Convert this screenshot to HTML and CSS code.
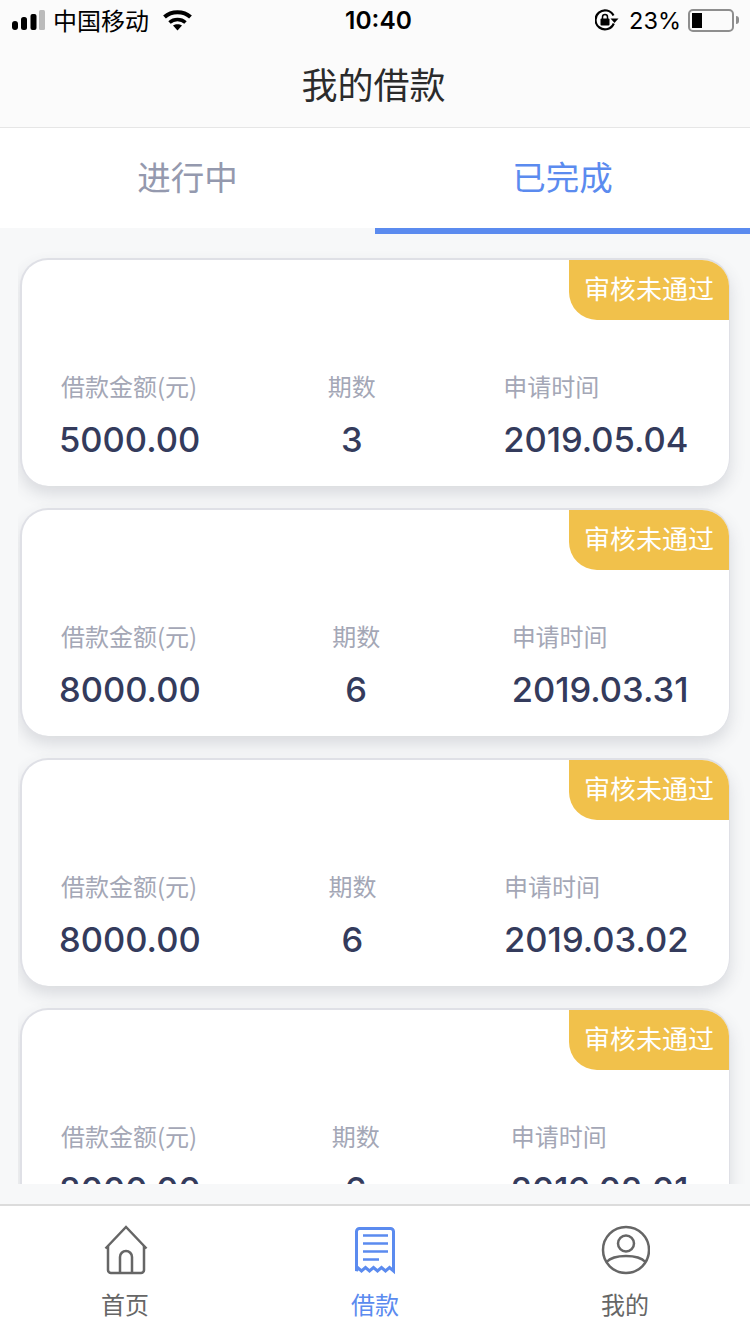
FILE: index.html
```html
<!DOCTYPE html>
<html lang="zh-CN">
<head>
    <meta charset="UTF-8">
    <meta name="viewport" content="width=device-width, initial-scale=1.0">
    <title>我的借款</title>
    <link rel="stylesheet" href="styles.css">
</head>
<body>
    <div class="app">
        <div class="status-bar">
            <div class="status-left">
                <svg class="signal" width="33" height="20" viewBox="0 0 33 20">
                    <rect x="0" y="11" width="6" height="9" rx="3" fill="#000"/>
                    <rect x="9" y="7" width="6" height="13" rx="2.5" fill="#000"/>
                    <rect x="18.500" y="4" width="6" height="16" rx="2" fill="#000"/>
                    <rect x="27" y="0" width="6" height="20" rx="1.500" fill="#bbb"/>
                </svg>
                <span class="carrier">中国移动</span>
                <svg class="wifi" width="29" height="21" viewBox="0 0 29 21">
                    <path d="M1.500 7C8.500.5 20.500.5 27.500 7" fill="none" stroke="#000" stroke-width="4"/>
                    <path d="M6.500 12.500C11 8.500 18 8.500 22.500 12.500" fill="none" stroke="#000" stroke-width="3.600"/>
                    <path d="M10 15.500C12.500 13.800 16.500 13.800 19 15.500L14.500 20.500Z" fill="#000"/>
                </svg>
            </div>
            <div class="status-time">10:40</div>
            <div class="status-right">
                <svg class="rotate-lock" width="24" height="22" viewBox="0 0 24 22">
                    <path d="M18.800 14.500A9.500 9.500 0 1 1 18.500 6.500" fill="none" stroke="#000" stroke-width="2.200"/>
                    <path d="M15.500 9.500h8l-4 4.500Z" fill="#000"/>
                    <rect x="5.500" y="9.500" width="9" height="7" rx="1" fill="#000"/>
                    <path d="M7.500 10V8a2.500 2.500 0 0 1 5 0v2" fill="none" stroke="#000" stroke-width="1.500"/>
                </svg>
                <span class="battery-text">23%</span>
                <div class="battery">
                    <div class="battery-body"><div class="battery-fill"></div></div>
                    <div class="battery-tip"></div>
                </div>
            </div>
        </div>
        <div class="title-bar">我的借款</div>
        <div class="tabs">
            <div class="tab">进行中</div>
            <div class="tab active">已完成</div>
        </div>

        <div class="list">
            <div class="card">
                <div class="card-top"><span class="badge">审核未通过</span></div>
                <div class="card-info">
                    <div class="col first">
                        <div class="label">借款金额(元)</div>
                        <div class="value">5000.00</div>
                    </div>
                    <div class="col center">
                        <div class="label">期数</div>
                        <div class="value">3</div>
                    </div>
                    <div class="col">
                        <div class="label">申请时间</div>
                        <div class="value">2019.05.04</div>
                    </div>
                </div>
            </div>
            <div class="card">
                <div class="card-top"><span class="badge">审核未通过</span></div>
                <div class="card-info">
                    <div class="col first">
                        <div class="label">借款金额(元)</div>
                        <div class="value">8000.00</div>
                    </div>
                    <div class="col center">
                        <div class="label">期数</div>
                        <div class="value">6</div>
                    </div>
                    <div class="col">
                        <div class="label">申请时间</div>
                        <div class="value">2019.03.31</div>
                    </div>
                </div>
            </div>
            <div class="card">
                <div class="card-top"><span class="badge">审核未通过</span></div>
                <div class="card-info">
                    <div class="col first">
                        <div class="label">借款金额(元)</div>
                        <div class="value">8000.00</div>
                    </div>
                    <div class="col center">
                        <div class="label">期数</div>
                        <div class="value">6</div>
                    </div>
                    <div class="col">
                        <div class="label">申请时间</div>
                        <div class="value">2019.03.02</div>
                    </div>
                </div>
            </div>
            <div class="card">
                <div class="card-top"><span class="badge">审核未通过</span></div>
                <div class="card-info">
                    <div class="col first">
                        <div class="label">借款金额(元)</div>
                        <div class="value">8000.00</div>
                    </div>
                    <div class="col center">
                        <div class="label">期数</div>
                        <div class="value">6</div>
                    </div>
                    <div class="col">
                        <div class="label">申请时间</div>
                        <div class="value">2019.02.01</div>
                    </div>
                </div>
            </div>
        </div>

        <div class="tabbar">
            <div class="tabbar-item">
                <svg width="50" height="52" viewBox="0 0 50 52" fill="none" stroke="#666" stroke-width="2.500">
                    <path d="M5.500 24.500 26 3 46.500 24.500"/>
                    <path d="M8 22V46a3 3 0 0 0 3 3h30a3 3 0 0 0 3-3V22"/>
                    <path d="M20 49V33a6 6 0 0 1 12 0v16"/>
                </svg>
                <span>首页</span>
            </div>
            <div class="tabbar-item active">
                <svg width="50" height="52" viewBox="0 0 50 52" fill="none" stroke="#5b8bef" stroke-width="3">
                    <path d="M6.500 47V7.500a3 3 0 0 1 3-3h31a3 3 0 0 1 3 3V47l-4-3.500-4 3.500-4-3.500-4 3.500-4-3.500-4 3.500-4-3.500-4 3.500-4-3.500Z"/>
                    <path d="M13 11.500h25M13 19.500h25M13 27.500h25M13 35.500h16" stroke-width="2.600"/>
                </svg>
                <span>借款</span>
            </div>
            <div class="tabbar-item">
                <svg width="50" height="52" viewBox="0 0 50 52" fill="none" stroke="#666" stroke-width="2.500">
                    <circle cx="26" cy="26" r="23"/>
                    <circle cx="26" cy="19.500" r="8"/>
                    <path d="M6.500 38C14 30 38 30 45.500 38"/>
                </svg>
                <span>我的</span>
            </div>
        </div>
    </div>
</body>
</html>
```

FILE: styles.css
```css
* {
    box-sizing: border-box;
}
body {
    margin: 0;
    background-color: #f7f8f9;
    font-family: "Noto Sans CJK SC", "Noto Sans", sans-serif;
}
.app {
    display: flex;
    flex-direction: column;
    width: 750px;
    height: 1334px;
    overflow: hidden;
}
.status-bar {
    display: flex;
    align-items: center;
    justify-content: space-between;
    height: 40px;
    padding: 0 11px 0 12px;
    background-color: #fbfbfb;
    color: #000;
}
.status-left {
    display: flex;
    align-items: center;
    width: 226px;
}
.carrier {
    margin-left: 8px;
    margin-top: -2px;
    font-size: 24px;
}
.wifi {
    margin-left: 14px;
}
.status-time {
    font-family: Inter, sans-serif;
    font-size: 24.500px;
    font-weight: 600;
}
.status-right {
    display: flex;
    align-items: center;
    justify-content: flex-end;
    width: 220px;
}
.battery-text {
    margin-left: 10px;
    font-family: Inter, sans-serif;
    font-size: 23.500px;
}
.battery {
    display: flex;
    align-items: center;
    margin-left: 7px;
}
.battery-body {
    width: 46px;
    height: 23px;
    padding: 2px;
    border: 2px solid #8e8e8e;
    border-radius: 5px;
}
.battery-fill {
    width: 10px;
    height: 100%;
    background-color: #000;
}
.battery-tip {
    width: 3px;
    height: 8px;
    margin-left: 2px;
    background-color: #8e8e8e;
    border-radius: 0 3px 3px 0;
}
.title-bar {
    height: 88px;
    padding-right: 3px;
    line-height: 86px;
    text-align: center;
    font-size: 36px;
    color: #2b2b2b;
    background-color: #fbfbfb;
    border-bottom: 1px solid #e6e6e6;
}
.tabs {
    display: flex;
    height: 106px;
}
.tab {
    flex: 1;
    height: 100px;
    line-height: 96px;
    text-align: center;
    font-size: 33.500px;
    color: #9499ae;
    background-color: #fff;
}
.tab.active {
    height: 106px;
    color: #5b8bef;
    border-bottom: 6px solid #5b8bef;
}
.list {
    height: 950px;
    margin-left: 18px;
    padding: 24px 20px 0 2px;
    overflow: hidden;
}
.card {
    width: 710px;
    height: 228px;
    margin-bottom: 22px;
    background-color: #fff;
    border: 2px solid #dfe0e6;
    border-right-width: 1px;
    border-bottom: none;
    border-radius: 28px;
    box-shadow: 0 8px 16px rgba(60, 70, 90, 0.16);
    overflow: hidden;
}
.card-top {
    display: flex;
    justify-content: flex-end;
    height: 60px;
}
.badge {
    width: 160px;
    height: 60px;
    line-height: 56px;
    text-align: center;
    font-size: 26px;
    color: #fff;
    background-color: #f1c14b;
    border-bottom-left-radius: 28px;
}
.card-info {
    display: flex;
    justify-content: space-between;
    padding: 48px 40.500px 0 39px;
}
.col.center {
    text-align: center;
}
.label {
    font-size: 24px;
    line-height: 36px;
    color: #a4a7b6;
}
.value {
    margin-top: 16px;
    font-family: Inter, sans-serif;
    font-size: 34.500px;
    font-weight: 500;
    line-height: 40px;
    color: #343b5c;
}
.col.first .value {
    margin-left: -2px;
}
.tabbar {
    display: flex;
    flex: 1;
    margin-top: 20px;
    background-color: #fff;
    border-top: 2px solid #dcdcdc;
}
.tabbar-item {
    flex: 1;
    display: flex;
    flex-direction: column;
    align-items: center;
    padding-top: 18px;
    font-size: 24px;
    color: #666;
}
.tabbar-item span {
    line-height: 36px;
    margin-top: 10px;
}
.tabbar-item.active {
    color: #5b8bef;
}
```
